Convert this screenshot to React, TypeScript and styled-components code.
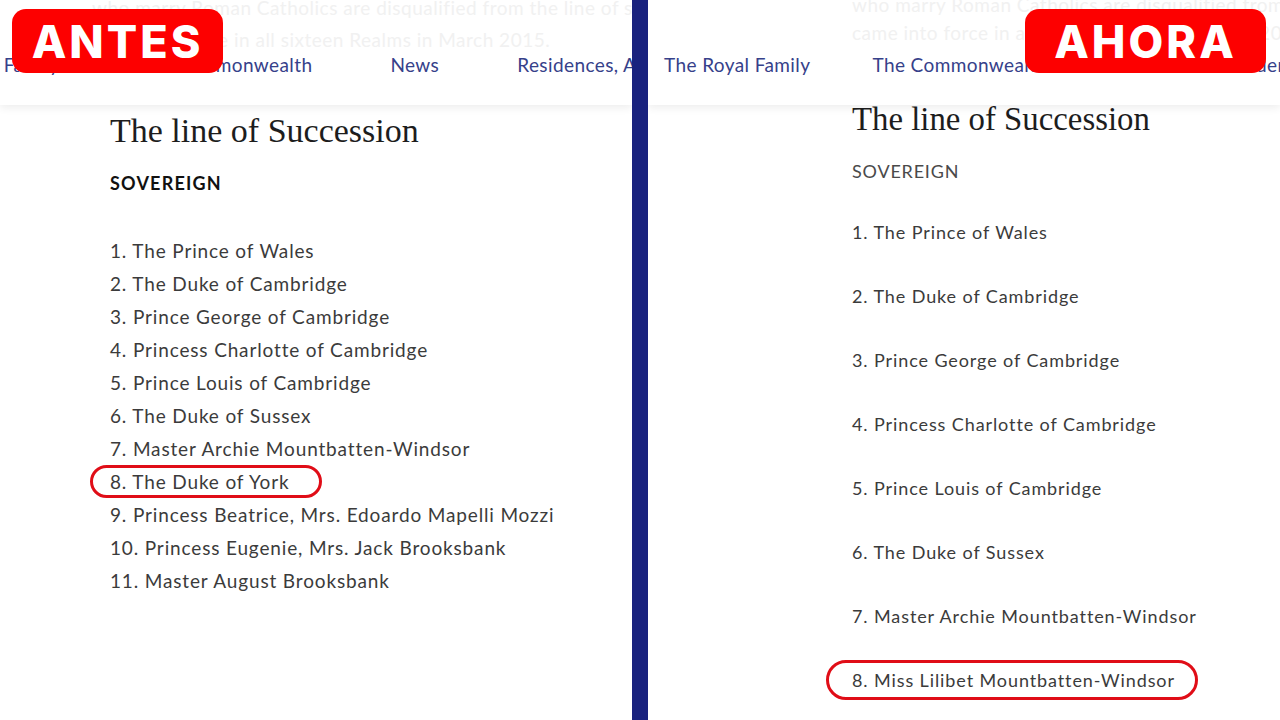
import React from 'react'
import styled, { createGlobalStyle } from 'styled-components'

const GlobalStyle = createGlobalStyle`
  html, body {
    margin: 0;
    padding: 0;
    background: #fff;
  }
  body {
    font-family: Lato, 'Open Sans', sans-serif;
  }
`

type Side = {
  key: string
  badge: string
  badgeWidth: number
  badgeSide: 'left' | 'right'
  badgeOffset: number
  fade: string[]
  fadeIndent: number
  fadeLine: number
  fadeTop: number
  navOffset: number
  navGap: number
  navTop: number
  indent: number
  titleSize: number
  titleTop: number
  boldLabel: boolean
  labelTop: number
  listTop: number
  rowHeight: number
  itemSize: number
  itemSpacing: number
  names: string[]
  circled: number
}

const NAV = ['The Royal Family', 'The Commonwealth', 'News', 'Residences, Art & Collections']

const SIDES: Side[] = [
  {
    key: 'before',
    badge: 'ANTES',
    badgeWidth: 211,
    badgeSide: 'left',
    badgeOffset: 12,
    fade: [
      'who marry Roman Catholics are disqualified from the line of succession',
      'came into force in all sixteen Realms in March 2015.',
    ],
    fadeIndent: 92,
    fadeLine: 32,
    fadeTop: -8,
    navOffset: -87,
    navGap: 78,
    navTop: -2,
    indent: 110,
    titleSize: 34,
    titleTop: 6,
    boldLabel: true,
    labelTop: 20,
    listTop: 39,
    rowHeight: 33,
    itemSize: 19,
    itemSpacing: 0.85,
    names: [
      'The Prince of Wales',
      'The Duke of Cambridge',
      'Prince George of Cambridge',
      'Princess Charlotte of Cambridge',
      'Prince Louis of Cambridge',
      'The Duke of Sussex',
      'Master Archie Mountbatten-Windsor',
      'The Duke of York',
      'Princess Beatrice, Mrs. Edoardo Mapelli Mozzi',
      'Princess Eugenie, Mrs. Jack Brooksbank',
      'Master August Brooksbank',
    ],
    circled: 7,
  },
  {
    key: 'after',
    badge: 'AHORA',
    badgeWidth: 241,
    badgeSide: 'right',
    badgeOffset: 14,
    fade: [
      'who marry Roman Catholics are disqualified from the line of succession',
      'came into force in all sixteen Realms in March 2015.',
    ],
    fadeIndent: 204,
    fadeLine: 28,
    fadeTop: -9,
    navOffset: 16,
    navGap: 62,
    navTop: 7,
    indent: 204,
    titleSize: 32.8,
    titleTop: -6,
    boldLabel: false,
    labelTop: 20,
    listTop: 17,
    rowHeight: 64,
    itemSize: 18,
    itemSpacing: 0.9,
    names: [
      'The Prince of Wales',
      'The Duke of Cambridge',
      'Prince George of Cambridge',
      'Princess Charlotte of Cambridge',
      'Prince Louis of Cambridge',
      'The Duke of Sussex',
      'Master Archie Mountbatten-Windsor',
      'Miss Lilibet Mountbatten-Windsor',
    ],
    circled: 7,
  },
]

const Page = styled.div`
  display: flex;
  width: 1280px;
  height: 720px;
  overflow: hidden;
  background: #fff;
`

const Panel = styled.section`
  position: relative;
  flex: 0 0 632px;
  overflow: hidden;
  background: #fff;
`

const Divider = styled.div`
  flex: 0 0 16px;
  background: #19227e;
`

const Header = styled.header`
  position: relative;
  z-index: 1;
  height: 105px;
  overflow: hidden;
  background: #fff;
  box-shadow: 0 3px 8px rgba(0, 0, 0, 0.07);
`

const FadedCopy = styled.div<{ $indent: number; $line: number; $top: number }>`
  margin-top: ${({ $top }) => $top}px;
  padding-left: ${({ $indent }) => $indent}px;
  font-size: 19px;
  line-height: ${({ $line }) => $line}px;
  letter-spacing: 0.5px;
  color: #f1f1f1;
  white-space: nowrap;
`

const Nav = styled.nav<{ $offset: number; $gap: number; $top: number }>`
  display: flex;
  gap: ${({ $gap }) => $gap}px;
  margin-top: ${({ $top }) => $top}px;
  margin-left: ${({ $offset }) => $offset}px;
  white-space: nowrap;
`

const NavLink = styled.a`
  font-size: 19px;
  line-height: 22px;
  letter-spacing: 0.4px;
  color: #36418a;
  text-decoration: none;
`

const Badge = styled.div<{ $width: number; $side: 'left' | 'right'; $offset: number }>`
  position: absolute;
  z-index: 2;
  top: 9px;
  ${({ $side, $offset }) => `${$side}: ${$offset}px;`}
  width: ${({ $width }) => $width}px;
  height: 64px;
  display: flex;
  align-items: center;
  justify-content: center;
  background: #fd0000;
  border-radius: 14px;
  color: #fff;
  font-family: Inter, 'Liberation Sans', sans-serif;
  font-weight: 800;
  font-size: 45px;
  letter-spacing: 3px;
`

const Content = styled.div<{ $indent: number }>`
  padding-left: ${({ $indent }) => $indent}px;
`

const Title = styled.h2<{ $size: number; $top: number }>`
  margin: ${({ $top }) => $top}px 0 0;
  font-family: 'Liberation Serif', 'DejaVu Serif', serif;
  font-weight: 400;
  font-size: ${({ $size }) => $size}px;
  line-height: 40px;
  color: #1d1d1d;
`

const Label = styled.div<{ $bold: boolean; $top: number }>`
  margin-top: ${({ $top }) => $top}px;
  font-size: 18px;
  line-height: 24px;
  letter-spacing: ${({ $bold }) => ($bold ? 1.2 : 0.8)}px;
  font-weight: ${({ $bold }) => ($bold ? 700 : 400)};
  color: ${({ $bold }) => ($bold ? '#111' : '#4a4a4a')};
`

const List = styled.ol<{ $top: number }>`
  list-style: none;
  margin: ${({ $top }) => $top}px 0 0;
  padding: 0;
`

const Item = styled.li<{ $row: number; $size: number; $spacing: number }>`
  height: ${({ $row }) => $row}px;
  line-height: ${({ $row }) => $row}px;
  font-size: ${({ $size }) => $size}px;
  letter-spacing: ${({ $spacing }) => $spacing}px;
  color: #3b3b3b;
  white-space: nowrap;
`

const Circled = styled.span<{ $wide: boolean }>`
  position: relative;
  display: inline-block;

  &::after {
    content: '';
    position: absolute;
    top: ${({ $wide }) => ($wide ? 12 : 0)}px;
    bottom: ${({ $wide }) => ($wide ? 12 : 0)}px;
    left: ${({ $wide }) => ($wide ? -26 : -20)}px;
    right: ${({ $wide }) => ($wide ? -23 : -32)}px;
    border: 3px solid #e00d17;
    border-radius: 20px;
  }
`

const SuccessionPanel = ({ side }: { side: Side }) => (
  <Panel>
    <Header>
      <FadedCopy $indent={side.fadeIndent} $line={side.fadeLine} $top={side.fadeTop}>
        {side.fade.map((line) => (
          <div key={line}>{line}</div>
        ))}
      </FadedCopy>
      <Nav $offset={side.navOffset} $gap={side.navGap} $top={side.navTop}>
        {NAV.map((n) => (
          <NavLink key={n}>{n}</NavLink>
        ))}
      </Nav>
    </Header>
    <Badge $width={side.badgeWidth} $side={side.badgeSide} $offset={side.badgeOffset}>
      {side.badge}
    </Badge>
    <Content $indent={side.indent}>
      <Title $size={side.titleSize} $top={side.titleTop}>
        The line of Succession
      </Title>
      <Label $bold={side.boldLabel} $top={side.labelTop}>
        SOVEREIGN
      </Label>
      <List $top={side.listTop}>
        {side.names.map((name, i) => {
          const text = `${i + 1}. ${name}`
          return (
            <Item key={name} $row={side.rowHeight} $size={side.itemSize} $spacing={side.itemSpacing}>
              {i === side.circled ? <Circled $wide={side.key === 'after'}>{text}</Circled> : text}
            </Item>
          )
        })}
      </List>
    </Content>
  </Panel>
)

export default function App() {
  return (
    <>
      <GlobalStyle />
      <Page>
        <SuccessionPanel side={SIDES[0]} />
        <Divider />
        <SuccessionPanel side={SIDES[1]} />
      </Page>
    </>
  )
}
